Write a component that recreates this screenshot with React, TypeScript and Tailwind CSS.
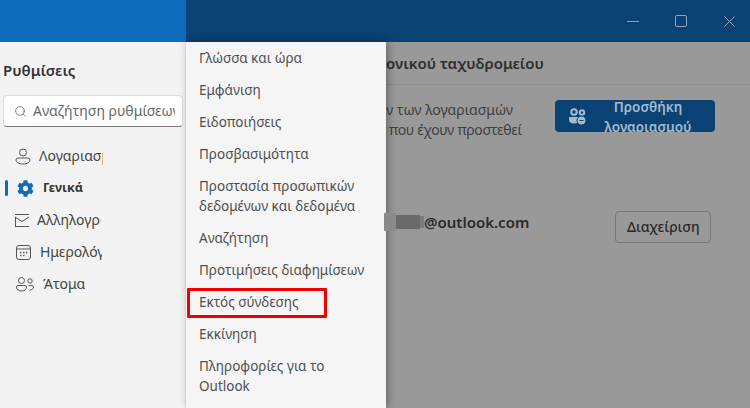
import { Search } from 'lucide-react'
import { FaCog } from 'react-icons/fa'

const menuItems = [
  ['Γλώσσα και ώρα'],
  ['Εμφάνιση'],
  ['Ειδοποιήσεις'],
  ['Προσβασιμότητα'],
  ['Προστασία προσωπικών', 'δεδομένων και δεδομένα'],
  ['Αναζήτηση'],
  ['Προτιμήσεις διαφημίσεων'],
  ['Εκτός σύνδεσης'],
  ['Εκκίνηση'],
  ['Πληροφορίες για το', 'Outlook'],
]

const PersonIcon = () => (
  <svg width="16" height="17" viewBox="0 0 16 17" fill="none" stroke="#555" strokeWidth="1">
    <circle cx="8" cy="4.500" r="3.500" />
    <path d="M3 10h10a2 2 0 0 1 2 2c0 2.500-3 4-7 4s-7-1.500-7-4a2 2 0 0 1 2-2z" />
  </svg>
)

const MailIcon = () => (
  <svg width="14" height="13" viewBox="0 0 14 13" fill="none" stroke="#555" strokeWidth="1">
    <path d="M0 .5h14M0 12.500h14M0 3l7 4.500L14 3M.5 3v9.500" />
  </svg>
)

const CalendarIcon = () => (
  <svg width="15" height="15" viewBox="0 0 15 15" fill="none" stroke="#555" strokeWidth="1">
    <rect x=".5" y=".5" width="14" height="14" rx="2.500" />
    <path d="M.5 4h14" />
    <path d="M4 7.500h1.500M7 7.500h1.500M10 7.500h1.500M4 10.500h1.500M7 10.500h1.500" strokeWidth="1.500" />
  </svg>
)

const PeopleIcon = () => (
  <svg width="18" height="15" viewBox="0 0 18 15" fill="none" stroke="#555" strokeWidth="1">
    <circle cx="5.500" cy="3.500" r="3" />
    <circle cx="14" cy="4" r="2.200" />
    <path d="M2 8.500h7a1.500 1.500 0 0 1 1.500 1.500c0 2.500-2 4-5 4s-5-1.500-5-4A1.500 1.500 0 0 1 2 8.500z" />
    <path d="M12.500 8.500H16a1.500 1.500 0 0 1 1.500 1.500c0 1.800-1.500 3-4 3" />
  </svg>
)

// the add-account glyph is a heavier version with a small minus badge
const AddPeopleIcon = () => (
  <svg width="18" height="18" viewBox="0 0 18 18" fill="none" stroke="#a6bace" strokeWidth="2">
    <circle cx="5" cy="4" r="2.800" />
    <circle cx="13" cy="4.500" r="2.200" />
    <path d="M1 10h8v1.500c0 1.800-1.800 3-4 3s-4-1.200-4-3z" fill="#a6bace" />
    <circle cx="12.500" cy="12.500" r="4.500" fill="#a6bace" stroke="#0a4273" strokeWidth="1" />
    <path d="M10.500 12.500h4" stroke="#0a4273" strokeWidth="1" />
  </svg>
)

export default function App() {
  return (
    <div className="w-[750px] h-[408px] overflow-hidden flex flex-col font-['Noto_Sans','Open_Sans',sans-serif] text-[14px] leading-5">
      <header className="h-[42px] shrink-0 flex bg-[#0a4273]">
        <div className="w-[186px] bg-[#0f6cbd]"></div>
        <div className="flex-1 flex items-center justify-end">
          <div className="w-[12px] h-[1px] bg-[#8ea6bc] mr-[36px]"></div>
          <div className="w-[12px] h-[12px] border border-[#8ea6bc] rounded-[2px] mr-[37px]"></div>
          <svg width="11" height="11" viewBox="0 0 11 11" className="mr-[15px]" stroke="#8ea6bc" strokeWidth="1">
            <path d="M.5.500l10 10M10.500.500l-10 10" />
          </svg>
        </div>
      </header>

      <div className="flex-1 flex min-h-0">
        {/* settings nav */}
        <aside className="w-[186px] shrink-0 bg-[#f3f3f3] border-r border-[#ebebeb] pl-[3px]">
          <h1 className="mt-[18px] text-[15px] leading-5 font-semibold text-[#333]">Ρυθμίσεις</h1>
          <div className="mt-[15px] w-[180px] h-[32px] bg-white border border-[#dcdcdc] border-b-[#777] rounded-[4px] flex items-center pl-[10px] overflow-hidden">
            <Search className="w-[13px] h-[13px] text-[#666] shrink-0" strokeWidth={1.500} />
            <span className="ml-[6px] w-[142px] overflow-hidden whitespace-nowrap text-[#666]">Αναζήτηση ρυθμίσεων</span>
          </div>

          <nav className="mt-[13px] flex flex-col text-[#444]">
            <div className="h-[32px] flex items-center pl-[12px]">
              <PersonIcon />
              <span className="ml-[8px] w-[64px] overflow-hidden whitespace-nowrap">Λογαριασμοί</span>
            </div>
            <div className="h-[32px] flex items-center">
              <div className="ml-[2px] w-[3px] h-[16px] bg-[#0f6cbd] rounded-sm"></div>
              <FaCog className="ml-[9px] text-[#0f6cbd]" size={17} />
              <span className="ml-[9px] font-bold text-[12.500px] text-[#333]">Γενικά</span>
            </div>
            <div className="h-[32px] flex items-center pl-[12px]">
              <MailIcon />
              <span className="ml-[8px] w-[64px] overflow-hidden whitespace-nowrap">Αλληλογραφία</span>
            </div>
            <div className="h-[32px] flex items-center pl-[13px]">
              <CalendarIcon />
              <span className="ml-[9px] w-[62px] overflow-hidden whitespace-nowrap">Ημερολόγιο</span>
            </div>
            <div className="h-[32px] flex items-center pl-[13px]">
              <PeopleIcon />
              <span className="ml-[9px]">Άτομα</span>
            </div>
          </nav>
        </aside>

        {/* general submenu */}
        <div className="w-[200px] shrink-0 bg-[#f5f5f5] shadow-[2px_0_8px_rgba(0,0,0,0.35)] z-10 text-[#505050] text-[13.500px]">
          {menuItems.map((lines) => (
            <div key={lines[0]} className="relative py-[6px] pl-[13px] whitespace-nowrap">
              {lines.map((line) => (
                <div key={line}>{line}</div>
              ))}
              {lines[0] === 'Εκτός σύνδεσης' && (
                <div className="absolute left-[1px] top-[2px] w-[140px] h-[30px] border-[3px] border-[#f00000] rounded-[1px]"></div>
              )}
            </div>
          ))}
        </div>

        {/* dimmed page behind */}
        <main className="flex-1 bg-[#999999] text-[#333]">
          <div className="h-[43px] border-b border-[#8e8e8e] flex items-center text-[15px] font-semibold text-[#2e2e2e]">
            <span>ονικού ταχυδρομείου</span>
          </div>
          <div className="mt-[15px] flex">
            <div className="w-[169px] h-[40px] text-[14px] text-[#3f3f3f] whitespace-nowrap overflow-hidden">
              <div>ν των λογαριασμών</div>
              <div className="pl-[3px] tracking-[-0.3px]">που έχουν προστεθεί</div>
            </div>
            <div className="w-[160px] h-[32px] rounded-[4px] bg-[#0a4273] text-[#a6bace] font-semibold text-[13.500px] flex overflow-hidden">
              <div className="ml-[14px] mt-[8px] shrink-0">
                <AddPeopleIcon />
              </div>
              <div className="flex-1 mr-[6px] text-center -mt-[3px] leading-[20px]">
                <div>Προσθήκη</div>
                <div>λογαριασμού</div>
              </div>
            </div>
          </div>
          <div className="mt-[71px] flex items-start">
            <div className="relative z-20 flex items-center h-[18px] w-[40px] -ml-[2px] mt-[2px]">
              <div className="w-[12px] h-[18px] bg-[#8a8a8a]"></div>
              <div className="w-[24px] h-[14px] bg-[#6a6a6a]"></div>
              <div className="w-[4px] h-[12px] bg-[#7c7c7c]"></div>
            </div>
            <span className="leading-[22px] text-[15px] font-semibold text-[#2a2a2a]">@outlook.com</span>
            <button className="ml-[86px] w-[96px] h-[32px] border border-[#777] rounded-[4px] text-[14px] font-medium text-[#2a2a2a]">Διαχείριση</button>
          </div>
        </main>
      </div>
    </div>
  )
}
